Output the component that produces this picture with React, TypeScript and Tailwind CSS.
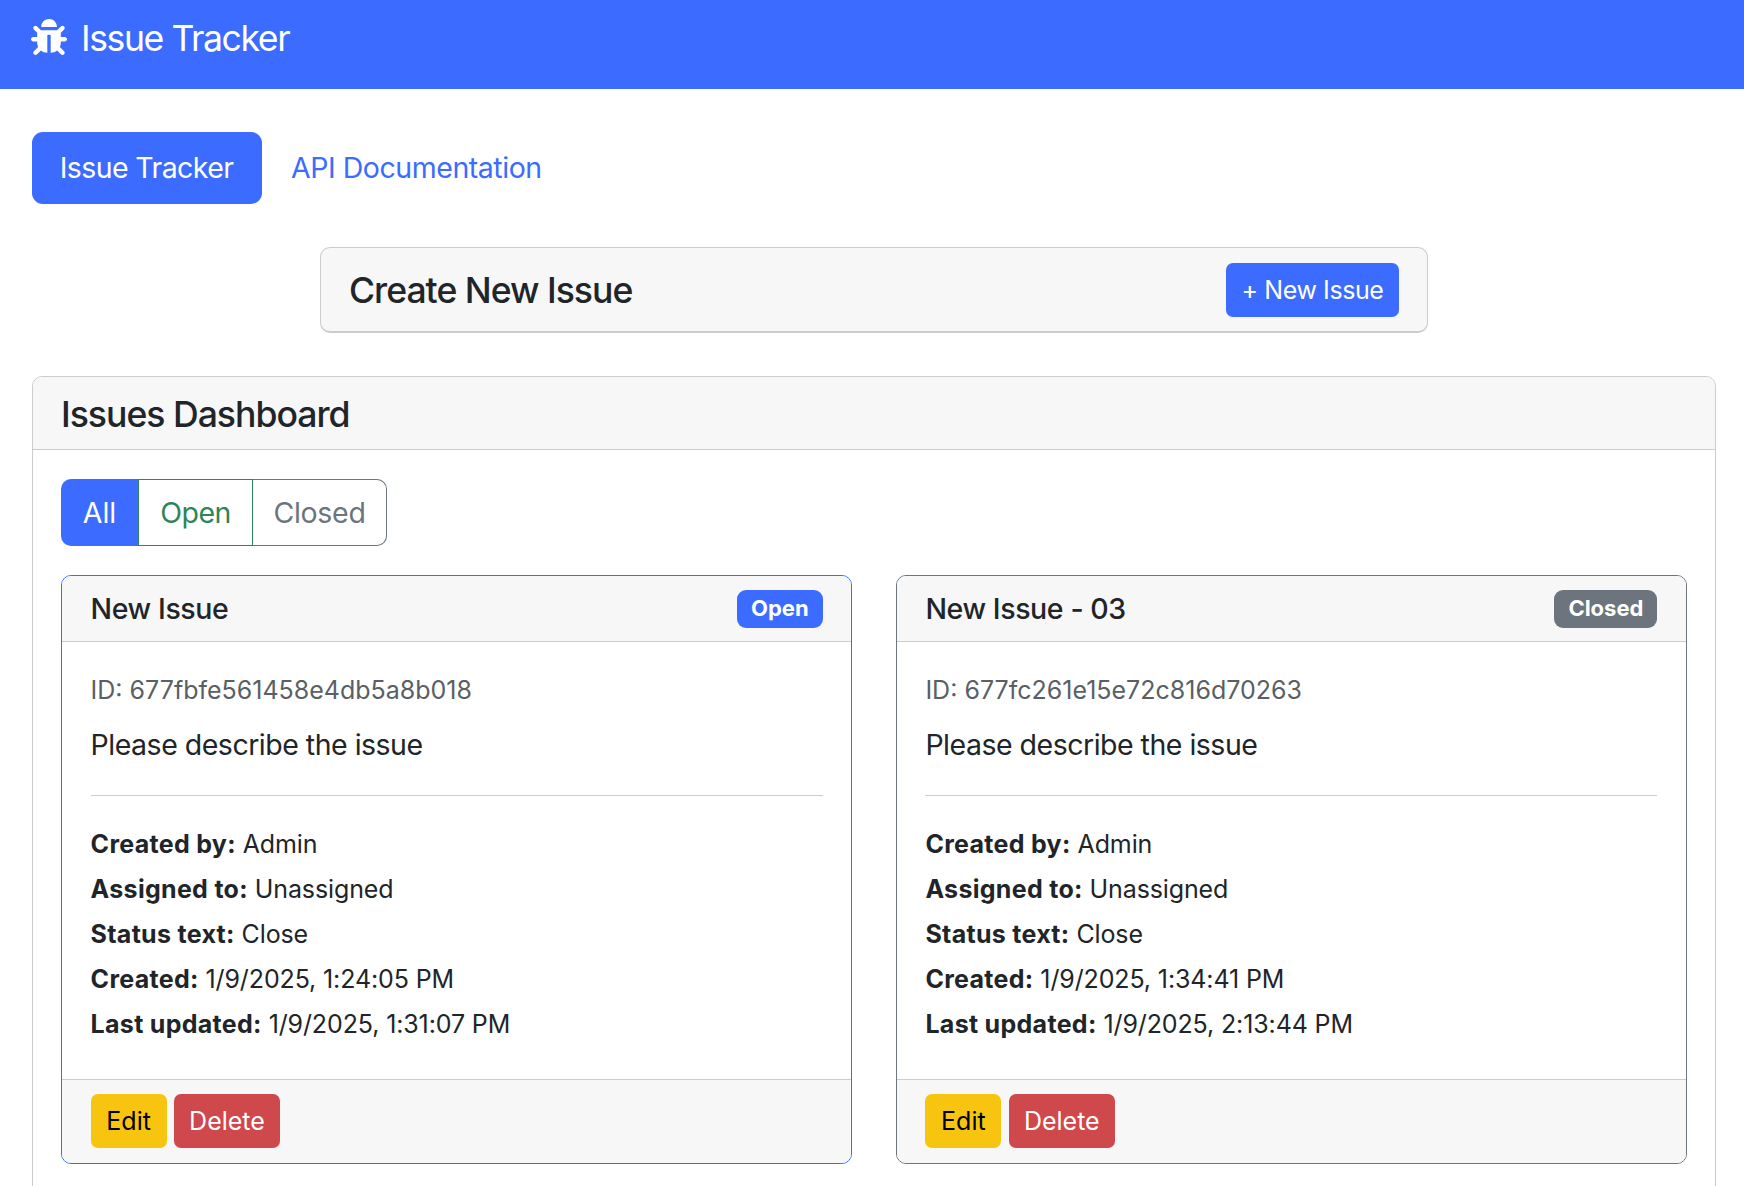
import { FaBug } from 'react-icons/fa';

type Issue = {
  title: string;
  id: string;
  status: 'Open' | 'Closed';
  created: string;
  updated: string;
};

const issues: Issue[] = [
  {
    title: 'New Issue',
    id: '677fbfe561458e4db5a8b018',
    status: 'Open',
    created: '1/9/2025, 1:24:05 PM',
    updated: '1/9/2025, 1:31:07 PM',
  },
  {
    title: 'New Issue - 03',
    id: '677fc261e15e72c816d70263',
    status: 'Closed',
    created: '1/9/2025, 1:34:41 PM',
    updated: '1/9/2025, 2:13:44 PM',
  },
];

function Row({ label, value }: { label: string; value: string }) {
  return (
    <p className="h-[45px] text-[25px] leading-[45px] tracking-[-0.12px]">
      <strong className="font-bold tracking-[0.3px]">{label}</strong> {value}
    </p>
  );
}

function IssueCard({ issue }: { issue: Issue }) {
  const open = issue.status === 'Open';
  return (
    <div
      className={`h-[589px] overflow-hidden rounded-[10px] border ${open ? 'border-[#3b6cff]' : 'border-[#6c757d]'}`}
    >
      <div className="flex h-[66px] items-center justify-between border-b border-[#cccccc] bg-[#f7f7f7] px-[28.6px]">
        <h5 className="pt-[2px] text-[28.5px] font-medium tracking-[-0.4px]">{issue.title}</h5>
        <span
          className={`flex h-[38px] items-center rounded-[9px] px-[14px] text-[22px] font-bold text-white ${open ? 'bg-[#3b6cff]' : 'bg-[#6c757d]'}`}
        >
          {issue.status}
        </span>
      </div>
      <div className="h-[437px] px-[28.6px] pt-[29px]">
        <p className="text-[25px] leading-[38px] text-[#595f65]">ID: {issue.id}</p>
        <p className="mt-[15px] text-[28.5px] leading-[42px] tracking-[-0.5px]">Please describe the issue</p>
        <hr className="mt-[29px] border-[#cccccc]" />
        <div className="mt-[26px]">
          <Row label="Created by:" value="Admin" />
          <Row label="Assigned to:" value="Unassigned" />
          <Row label="Status text:" value="Close" />
          <Row label="Created:" value={issue.created} />
          <Row label="Last updated:" value={issue.updated} />
        </div>
      </div>
      <div className="flex h-[84px] items-center gap-[7.4px] border-t border-[#cccccc] bg-[#f7f7f7] px-[28.6px] pb-[1px]">
        <button type="button" className="h-[54px] w-[76px] rounded-[7px] bg-[#f7c510] pt-[1px] text-[25px] text-black">
          Edit
        </button>
        <button type="button" className="h-[54px] w-[106px] rounded-[7px] bg-[#cf484b] pt-[1px] text-[25px] text-white">
          Delete
        </button>
      </div>
    </div>
  );
}

export default function App() {
  return (
    <div className="h-[1186px] overflow-hidden bg-white font-['Inter',sans-serif] text-[#212529]">
      <nav className="flex h-[89px] items-start gap-[14px] bg-[#3b6cff] pl-[31px] pt-[17px] text-white">
        <FaBug className="mt-[2px] h-[36px] w-[36px]" aria-hidden />
        <span className="text-[35.6px] leading-[44px] tracking-[-1.4px]">Issue Tracker</span>
      </nav>

      <main className="pl-[32px] pr-[28px] pt-[43px]">
        <div className="flex items-center gap-[1px]">
          <a className="flex h-[72px] w-[230px] items-center justify-center rounded-[11px] bg-[#3b6cff] pr-[1px] text-[28.5px] tracking-[-0.6px] text-white">
            Issue Tracker
          </a>
          <a className="px-[28px] text-[28.5px] tracking-[-0.45px] text-[#3b6cff]">API Documentation</a>
        </div>

        <div className="mx-auto mt-[43px] flex h-[86px] w-[1108px] items-center justify-between rounded-[10px] border border-[#cccccc] border-b-2 bg-[#f7f7f7] px-[28px]">
          <h5 className="pt-[2px] text-[35.6px] font-medium tracking-[-1px]">Create New Issue</h5>
          <button
            type="button"
            className="h-[54px] w-[173px] rounded-[7px] bg-[#3b6cff] pt-[2px] text-[25px] tracking-[-0.4px] text-white"
          >
            + New Issue
          </button>
        </div>

        <section className="mt-[43px] h-[900px] rounded-[10px] border border-[#cccccc]">
          <div className="flex h-[73px] items-center rounded-t-[10px] border-b border-[#cccccc] bg-[#f7f7f7] px-[28px]">
            <h4 className="pt-[3px] text-[35.6px] font-medium tracking-[-1px]">Issues Dashboard</h4>
          </div>
          <div className="px-[28px] pt-[29px]">
            <div className="flex h-[67px] w-[326px] text-[28.5px]">
              <button type="button" className="w-[77px] rounded-l-[10px] bg-[#3b6cff] pt-[1px] text-white">
                All
              </button>
              <button
                type="button"
                className="w-[115px] border border-[#2e8555] pt-[1px] tracking-[-0.5px] text-[#2e8555]"
              >
                Open
              </button>
              <button
                type="button"
                className="w-[134px] rounded-r-[10px] border border-l-0 border-[#6c757d] pt-[1px] tracking-[-0.3px] text-[#6c757d]"
              >
                Closed
              </button>
            </div>
            <div className="mt-[29px] grid grid-cols-2 gap-[43.6px]">
              {issues.map((issue) => (
                <IssueCard key={issue.id} issue={issue} />
              ))}
            </div>
          </div>
        </section>
      </main>
    </div>
  );
}
